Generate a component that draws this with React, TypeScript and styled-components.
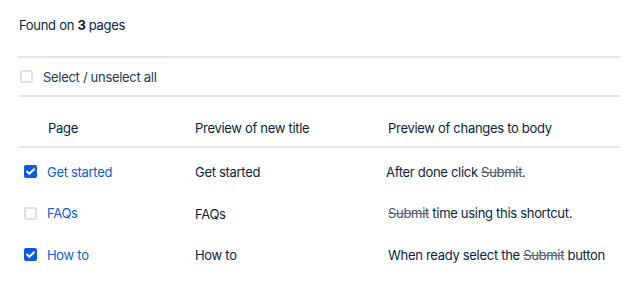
import React from "react";
import styled, { createGlobalStyle } from "styled-components";

const Global = createGlobalStyle`
  html, body { margin: 0; padding: 0; background: #fff; }
  body { font-family: Inter, "Noto Sans", "Liberation Sans", sans-serif; color: #172b4d; }
`;

const Wrap = styled.div`
  width: 601px;
  padding-left: 19px;
  font-size: 13px;
  letter-spacing: -0.3px;
`;

const Summary = styled.div`
  height: 56px;
  display: flex;
  align-items: flex-start;
  padding-top: 17px;
  box-sizing: border-box;
  color: #091e42;
  b { font-weight: 700; }
`;

const Divider = styled.div`
  height: 2px;
  background: #e6e6e6;
`;

const SelectAllRow = styled.label`
  height: 37px;
  display: flex;
  align-items: center;
  gap: 10px;
  padding-left: 1px;
  color: #253858;
`;

const Box = styled.span<{ $checked?: boolean }>`
  width: 13px;
  height: 13px;
  box-sizing: border-box;
  border-radius: 2px;
  flex: none;
  display: inline-flex;
  align-items: center;
  justify-content: center;
  background: ${(p) => (p.$checked ? "#0c5ce0" : "#fff")};
  border: ${(p) => (p.$checked ? "none" : "2px solid #dfe1e6")};
`;

const Grid = styled.div`
  display: grid;
  grid-template-columns: 176px 191px 1fr;
  align-items: center;
`;

const HeadRow = styled(Grid)`
  height: 49px;
  padding-bottom: 10px;
  box-sizing: border-box;
  align-items: end;
  color: #091e42;
`;

const HeadCell = styled.div<{ $indent?: number }>`
  padding-left: ${(p) => p.$indent ?? 0}px;
`;

const Body = styled.div`
  padding-top: 3px;
`;

const Row = styled(Grid)`
  height: 41.5px;
  color: #091e42;
`;

const PageCell = styled.div`
  display: flex;
  align-items: center;
  gap: 10px;
  padding-left: 5px;
`;

const Link = styled.a`
  color: #0c5ce0;
  text-decoration: none;
`;

const Cell = styled.div<{ $indent?: number; $shift?: number }>`
  padding-left: ${(p) => p.$indent ?? 0}px;
  position: relative;
  top: ${(p) => p.$shift ?? 0}px;
`;

const Strike = styled.span`
  text-decoration: line-through;
  text-decoration-color: #5e6c84;
  color: #42526e;
`;

const Check = () => (
  <svg width="9" height="7" viewBox="0 0 9 7">
    <path d="M1 3.6 L3.4 5.8 L8 1.2" stroke="#fff" strokeWidth="2" fill="none" strokeLinecap="round" strokeLinejoin="round" />
  </svg>
);

const rows = [
  {
    checked: true,
    page: "Get started",
    title: "Get started",
    indent: 0,
    body: (
      <>
        After done click <Strike>Submit</Strike>.
      </>
    ),
  },
  {
    checked: false,
    page: "FAQs",
    title: "FAQs",
    indent: 2,
    body: (
      <>
        <Strike>Submit</Strike> time using this shortcut.
      </>
    ),
  },
  {
    checked: true,
    page: "How to",
    title: "How to",
    indent: 2,
    body: (
      <>
        When ready select the <Strike>Submit</Strike> button
      </>
    ),
  },
];

export default function App() {
  return (
    <Wrap>
      <Global />
      <Summary>
        <span>
          Found on <b>3</b> pages
        </span>
      </Summary>
      <Divider />
      <SelectAllRow>
        <Box />
        <span>Select / unselect all</span>
      </SelectAllRow>
      <Divider />
      <HeadRow>
        <HeadCell $indent={29}>Page</HeadCell>
        <HeadCell>Preview of new title</HeadCell>
        <HeadCell $indent={2}>Preview of changes to body</HeadCell>
      </HeadRow>
      <Divider />
      <Body>
        {rows.map((r) => (
          <Row key={r.page}>
            <PageCell>
              <Box $checked={r.checked}>{r.checked && <Check />}</Box>
              <Link href="#">{r.page}</Link>
            </PageCell>
            <Cell $shift={r.page === "FAQs" ? 1 : 0}>{r.title}</Cell>
            <Cell $indent={r.indent}>{r.body}</Cell>
          </Row>
        ))}
      </Body>
    </Wrap>
  );
}
